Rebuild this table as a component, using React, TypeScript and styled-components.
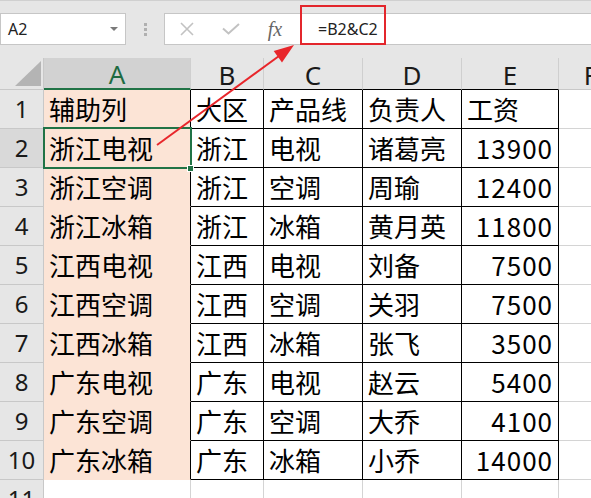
import React from 'react';
import styled, { createGlobalStyle, css } from 'styled-components';

const GlobalStyle = createGlobalStyle`
  html, body { margin: 0; padding: 0; background: #fff; overflow: hidden; }
  body { font-family: "Noto Sans CJK SC", "Noto Sans", sans-serif; }
`;

const Root = styled.div`
  position: relative;
  width: 591px;
  height: 498px;
  overflow: hidden;
  background: #fff;
`;

const Toolbar = styled.div`
  height: 58px;
  box-sizing: border-box;
  border-top: 1px solid #d0d0d0;
  background: #e6e6e6;
  display: flex;
  align-items: flex-start;
  padding-top: 12px;
`;

const NameBox = styled.div`
  width: 126px;
  height: 32px;
  box-sizing: border-box;
  background: #fff;
  border: 1px solid #c6c6c6;
  display: flex;
  align-items: center;
  justify-content: space-between;
  padding: 0 7px 0 7px;
  font-family: "Noto Sans", sans-serif;
  font-size: 16px;
  color: #222;
`;

const DropArrow = styled.span`
  width: 0;
  height: 0;
  border-left: 4px solid transparent;
  border-right: 4px solid transparent;
  border-top: 4px solid #7a7a7a;
`;

const Separator = styled.div`
  width: 38px;
  height: 32px;
  display: flex;
  flex-direction: column;
  align-items: center;
  justify-content: center;
  gap: 2px;
`;

const Dot = styled.span`
  width: 3px;
  height: 3px;
  background: #b0b0b0;
`;

const FormulaBox = styled.div`
  flex: 1;
  height: 32px;
  box-sizing: border-box;
  background: #fff;
  border: 1px solid #c6c6c6;
  border-right: none;
  display: flex;
  align-items: center;
`;

const IconButton = styled.span`
  width: 44px;
  height: 30px;
  display: flex;
  align-items: center;
  justify-content: center;
`;

const FxText = styled.span`
  font-family: "Liberation Serif", "DejaVu Serif", serif;
  font-style: italic;
  font-size: 20px;
  color: #666;
`;

const FormulaText = styled.span`
  padding-left: 21px;
  font-family: "Noto Sans", sans-serif;
  font-size: 16px;
  color: #222;
`;

const Sheet = styled.div`
  display: grid;
  grid-template-columns: 44px 147px 73px 99px 99px 97px 64px 1fr;
  grid-template-rows: 32px repeat(10, 39px) 39px;
`;

type Kind = 'corner' | 'colhead' | 'rowhead' | 'fill' | 'data' | 'empty';

const Cell = styled.div<{ $kind: Kind; $selected?: boolean; $right?: boolean; $top?: boolean }>`
  box-sizing: border-box;
  display: flex;
  align-items: center;
  white-space: nowrap;
  color: #000;
  font-size: 26px;
  line-height: 1;
  ${({ $kind, $selected, $right, $top }) => {
    switch ($kind) {
      case 'corner':
        return css`
          background: #e6e6e6;
          border-right: 1px solid #c8c8c8;
          border-bottom: 1px solid #c8c8c8;
          justify-content: flex-end;
          align-items: flex-end;
          padding: 0 2px 3px 0;
        `;
      case 'colhead':
        return css`
          background: ${$selected ? '#d2d2d2' : '#e6e6e6'};
          border-right: 1px solid #cfcfcf;
          border-bottom: ${$selected ? '2px solid #217346' : $top ? '1px solid #000' : '1px solid #c8c8c8'};
          justify-content: center;
          font-family: "Noto Sans", sans-serif;
          font-size: 26px;
          color: ${$selected ? '#1e6b41' : '#1a1a1a'};
          padding-top: 2px;
        `;
      case 'rowhead':
        return css`
          background: ${$selected ? '#d9d9d9' : '#e6e6e6'};
          border-right: 1px solid #c8c8c8;
          border-bottom: 1px solid #c8c8c8;
          justify-content: center;
          font-family: "Noto Sans", sans-serif;
          font-size: 24px;
          color: #1a1a1a;
        `;
      case 'fill':
        return css`
          background: #fce4d6;
          border-right: 1px solid #000;
          border-bottom: 1px solid #fce4d6;
          padding: 0 0 0 5px;
          overflow: hidden;
        `;
      case 'data':
        return css`
          background: #fff;
          border-right: 1px solid #000;
          border-bottom: 1px solid #000;
          justify-content: ${$right ? 'flex-end' : 'flex-start'};
          padding: ${$right ? '0 5px 0 0' : '0 0 0 5px'};
          letter-spacing: ${$right ? '1px' : '0'};
          overflow: hidden;
        `;
      default:
        return css`
          background: #fff;
          border-right: 1px solid #d4d4d4;
          border-bottom: 1px solid #d4d4d4;
        `;
    }
  }}
`;

const SelectionBox = styled.div`
  position: absolute;
  left: 43px;
  top: 127px;
  width: 149px;
  height: 42px;
  box-sizing: border-box;
  border: 2px solid #217346;
  pointer-events: none;
`;

const FillHandle = styled.div`
  position: absolute;
  left: 187px;
  top: 165px;
  width: 7px;
  height: 7px;
  box-sizing: border-box;
  background: #217346;
  border: 1px solid #fff;
`;

const Callout = styled.div`
  position: absolute;
  left: 300px;
  top: 5px;
  width: 86px;
  height: 40px;
  box-sizing: border-box;
  border: 2px solid #e3262c;
  pointer-events: none;
`;

const ArrowLayer = styled.svg`
  position: absolute;
  left: 0;
  top: 0;
  width: 591px;
  height: 498px;
  pointer-events: none;
`;

const rows: (string | number)[][] = [
  ['辅助列', '大区', '产品线', '负责人', '工资'],
  ['浙江电视', '浙江', '电视', '诸葛亮', 13900],
  ['浙江空调', '浙江', '空调', '周瑜', 12400],
  ['浙江冰箱', '浙江', '冰箱', '黄月英', 11800],
  ['江西电视', '江西', '电视', '刘备', 7500],
  ['江西空调', '江西', '空调', '关羽', 7500],
  ['江西冰箱', '江西', '冰箱', '张飞', 3500],
  ['广东电视', '广东', '电视', '赵云', 5400],
  ['广东空调', '广东', '空调', '大乔', 4100],
  ['广东冰箱', '广东', '冰箱', '小乔', 14000],
];

const cols = ['A', 'B', 'C', 'D', 'E', 'F', ''];

export default function App() {
  return (
    <Root>
      <GlobalStyle />
      <Toolbar>
        <NameBox>
          <span>A2</span>
          <DropArrow />
        </NameBox>
        <Separator>
          <Dot />
          <Dot />
          <Dot />
        </Separator>
        <FormulaBox>
          <IconButton>
            <svg width="14" height="14" viewBox="0 0 14 14">
              <path d="M1 1 L13 13 M13 1 L1 13" stroke="#c2c2c2" strokeWidth="1.6" fill="none" />
            </svg>
          </IconButton>
          <IconButton>
            <svg width="18" height="12" viewBox="0 0 18 12">
              <path d="M1 5.5 L6.5 10.5 L17 1" stroke="#c2c2c2" strokeWidth="2" fill="none" />
            </svg>
          </IconButton>
          <IconButton>
            <FxText>fx</FxText>
          </IconButton>
          <FormulaText>=B2&amp;C2</FormulaText>
        </FormulaBox>
      </Toolbar>
      <Sheet>
        <Cell $kind="corner">
          <svg width="26" height="25" viewBox="0 0 26 25">
            <polygon points="26,0 26,25 0,25" fill="#b4b4b4" />
          </svg>
        </Cell>
        {cols.map((c, i) => (
          <Cell key={c + i} $kind="colhead" $selected={i === 0} $top={i >= 1 && i <= 4}>
            {c}
          </Cell>
        ))}
        {rows.map((r, ri) => (
          <React.Fragment key={ri}>
            <Cell $kind="rowhead" $selected={ri === 1}>{ri + 1}</Cell>
            {r.map((v, ci) => (
              <Cell
                key={ci}
                $kind={ci === 0 ? 'fill' : 'data'}
                $right={typeof v === 'number'}
              >
                {v}
              </Cell>
            ))}
            <Cell $kind="empty" />
            <Cell $kind="empty" />
          </React.Fragment>
        ))}
        <Cell $kind="rowhead">11</Cell>
        {[0, 1, 2, 3, 4, 5, 6].map((i) => (
          <Cell key={i} $kind="empty" />
        ))}
      </Sheet>
      <SelectionBox />
      <FillHandle />
      <Callout />
      <ArrowLayer viewBox="0 0 591 498">
        <line x1="157" y1="145" x2="279" y2="56" stroke="#e8262b" strokeWidth="2" />
        <polygon points="294,45 282,62.5 273.7,51.1" fill="#e8262b" />
      </ArrowLayer>
    </Root>
  );
}
